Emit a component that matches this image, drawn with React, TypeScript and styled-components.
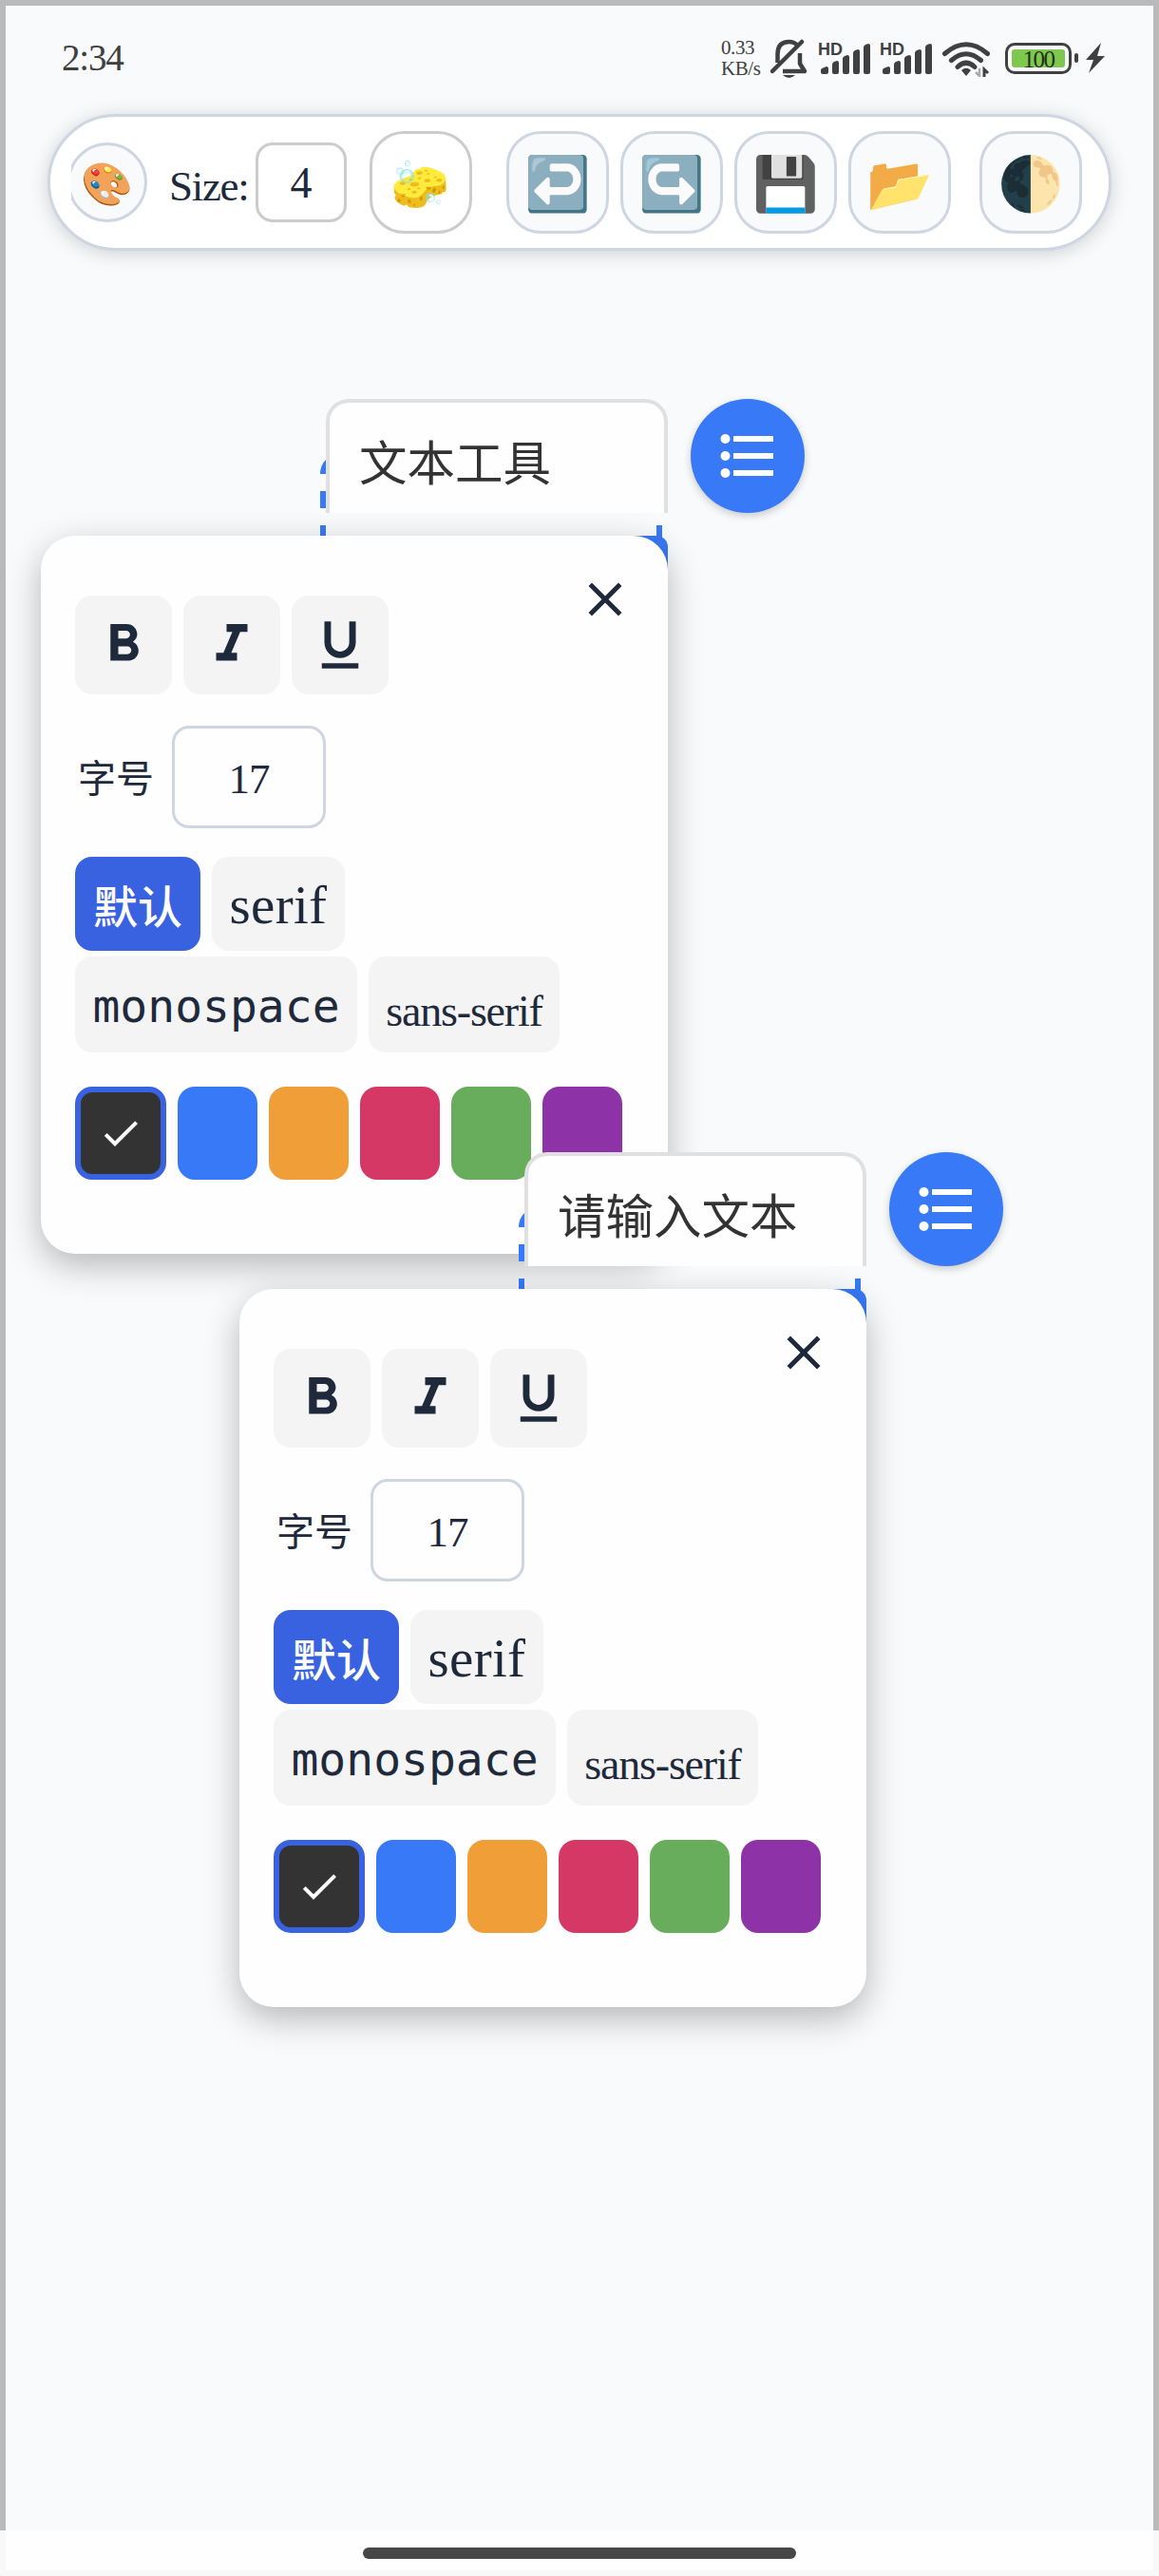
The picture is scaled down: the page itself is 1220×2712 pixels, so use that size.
import React from 'react';
import styled, { createGlobalStyle } from 'styled-components';
import { MdFormatBold, MdFormatItalic, MdFormatUnderlined, MdClose, MdCheck } from 'react-icons/md';

const GlobalStyle = createGlobalStyle`
  * { box-sizing: border-box; }
  body { margin: 0; }
  button { border: 0; padding: 0; font: inherit; color: inherit; }
`;

const serif = '"Liberation Serif", "Noto Sans CJK SC", serif';

const Screen = styled.div`
  width: 1220px;
  height: 2712px;
  display: flex;
  flex-direction: column;
  overflow: hidden;
  background: #f9fafc;
  color: #1e293b;
  font-family: ${serif};
`;

const Page = styled.main`
  position: relative;
  height: 2664px;
  border: solid #bababa;
  border-width: 6px 6px 0;
`;

const NavArea = styled.footer`
  height: 48px;
  display: flex;
  justify-content: center;
  padding-top: 18px;
  background: #fefefe;
  border: solid #f8f8f8;
  border-width: 0 6px 6px;
`;

const HomeBar = styled.div`
  width: 456px;
  height: 12px;
  border-radius: 6px;
  background: #474747;
`;

const StatusBar = styled.header`
  height: 114px;
  padding: 0 50px 4px 59px;
  display: flex;
  align-items: center;
  justify-content: space-between;
  color: #404040;
`;

const Clock = styled.span`
  font-size: 39px;
  letter-spacing: -1.2px;
  line-height: 44px;
`;

const StatusIcons = styled.div`
  display: flex;
  align-items: center;
  height: 44px;
`;

const Speed = styled.span`
  width: 52px;
  font-size: 21px;
  line-height: 22px;
  letter-spacing: -0.4px;
  white-space: nowrap;
`;

const MutedBell = styled.svg`
  margin-right: 11px;
`;

const Signal = styled.div`
  position: relative;
  width: 54px;
  height: 40px;
  margin-right: 11px;
`;

const HdMark = styled.span`
  position: absolute;
  left: -1px;
  top: 4px;
  font: bold 18px/14px "Liberation Sans", sans-serif;
`;

const Battery = styled.div`
  width: 70px;
  height: 33px;
  margin-left: 16px;
  padding: 4px;
  border: 3px solid #404040;
  border-radius: 10px;
  display: flex;
`;

const Charge = styled.span`
  flex: 1;
  border-radius: 3px;
  background: #7ec850;
  color: #20300f;
  text-align: center;
  font-size: 25px;
  line-height: 22px;
  letter-spacing: -1.6px;
`;

const BatteryTip = styled.div`
  width: 4px;
  height: 10px;
  margin: 0 7px 0 3px;
  border-radius: 2px;
  background: #404040;
`;

const Toolbar = styled.nav`
  margin-left: 44px;
  width: 1120px;
  height: 144px;
  padding: 0 22px;
  display: flex;
  align-items: center;
  border: 3px solid #ced6e2;
  border-radius: 72px;
  background: #fff;
  box-shadow: 0 3px 20px rgba(0, 0, 0, 0.17);
`;

const ToolScroller = styled.div`
  display: flex;
  align-items: center;
  width: 1070px;
  height: 138px;
  overflow: hidden;
`;

const PaletteButton = styled.button`
  flex: none;
  width: 84px;
  height: 84px;
  margin-left: -4px;
  padding-top: 4px;
  display: flex;
  align-items: center;
  justify-content: center;
  border: 3px solid #ced6e2;
  border-radius: 50%;
  background: #f8fafc;
`;

const SizeLabel = styled.label`
  flex: none;
  width: 91px;
  margin-left: 23px;
  font-size: 45px;
  letter-spacing: -1.3px;
  line-height: 84px;
  padding-top: 8px;
`;

const SizeInput = styled.div`
  flex: none;
  width: 96px;
  height: 84px;
  border: 3px solid #ccc;
  border-radius: 18px;
  font-size: 46px;
  line-height: 79px;
  text-align: center;
`;

const ToolButton = styled.button<{ $gap: number; $plain?: boolean }>`
  flex: none;
  width: 108px;
  height: 108px;
  margin-left: ${p => p.$gap}px;
  padding-top: 5px;
  display: flex;
  align-items: center;
  justify-content: center;
  border: 3px solid ${p => (p.$plain ? '#ccc' : '#ced6e2')};
  border-radius: 36px;
  background: ${p => (p.$plain ? '#fff' : '#f8fafc')};
`;

const Emoji = styled.span<{ $size: number }>`
  font-family: "Noto Color Emoji", sans-serif;
  font-size: ${p => p.$size}px;
  line-height: 1.2;
`;

const TextNode = styled.section<{ $x: number; $y: number }>`
  position: absolute;
  left: ${p => p.$x}px;
  top: ${p => p.$y}px;
  width: 804px;
`;

const Frame = styled.svg`
  position: absolute;
  left: 294px;
  top: 50px;
`;

const DoneTab = styled.div`
  position: absolute;
  left: 505px;
  top: 144px;
  width: 155px;
  height: 86px;
  border-radius: 12px;
  background: #3779f6;
`;

const NodeHead = styled.div`
  position: relative;
  display: flex;
  justify-content: flex-end;
  gap: 24px;
`;

const TextCard = styled.div`
  width: 360px;
  height: 120px;
  padding: 0 31px;
  border: solid #e0e0e0;
  border-width: 4px 4px 0;
  border-radius: 24px 24px 0 0;
  background: #fefefe;
  color: #333;
  font-size: 50.5px;
  line-height: 131px;
  white-space: nowrap;
`;

const MenuButton = styled.button`
  width: 120px;
  height: 120px;
  display: flex;
  align-items: center;
  justify-content: center;
  border-radius: 50%;
  background: #3779f6;
  box-shadow: 0 3px 9px rgba(0, 0, 0, 0.2);
`;

const Panel = styled.div`
  position: relative;
  width: 660px;
  height: 756px;
  margin-top: 24px;
  padding: 63px 36px 0;
  border-radius: 36px;
  background: #fefefe;
  box-shadow: 0 12px 36px rgba(0, 0, 0, 0.27);
`;

const CloseButton = styled.button`
  position: absolute;
  right: 36px;
  top: 37px;
  width: 60px;
  height: 60px;
  background: none;
`;

const Row = styled.div<{ $top?: number }>`
  display: flex;
  align-items: center;
  gap: 12px;
  margin-top: ${p => p.$top ?? 0}px;
`;

const FormatButton = styled.button`
  width: 102px;
  height: 104px;
  display: flex;
  align-items: center;
  justify-content: center;
  border-radius: 18px;
  background: #f4f4f4;
`;

const FieldLabel = styled.span`
  width: 90px;
  padding: 0 0 2px 3px;
  font-size: 40px;
  white-space: nowrap;
`;

const FieldInput = styled.div`
  width: 162px;
  height: 108px;
  border: 3px solid #ced6e2;
  border-radius: 18px;
  text-align: center;
  font-size: 45px;
  letter-spacing: -1px;
  line-height: 106px;
`;

const FontButton = styled.button<{ $w: number; $h: number; $font?: string; $size: number; $ls?: number; $line: number; $on?: boolean }>`
  width: ${p => p.$w}px;
  height: ${p => p.$h}px;
  display: flex;
  justify-content: center;
  align-items: flex-start;
  border-radius: 18px;
  background: ${p => (p.$on ? '#3862e0' : '#f4f4f4')};
  color: ${p => (p.$on ? '#fff' : '#1e293b')};
  font-family: ${p => p.$font ?? serif};
  font-size: ${p => p.$size}px;
  font-weight: ${p => (p.$on ? 500 : 400)};
  letter-spacing: ${p => p.$ls ?? 0}px;
  line-height: ${p => p.$line}px;
  white-space: nowrap;
`;

const Swatch = styled.button<{ $color: string; $on?: boolean }>`
  width: ${p => (p.$on ? 96 : 84)}px;
  height: 98px;
  display: flex;
  align-items: center;
  justify-content: center;
  border: ${p => (p.$on ? '6px solid #3862e0' : '0')};
  border-radius: 18px;
  background: ${p => p.$color};
  color: #fff;
`;

const swatches = ['#333333', '#3779f6', '#f09e38', '#d63865', '#68ad5c', '#8e32a8'];

function SignalIcon() {
  return (
    <Signal>
      <svg width="54" height="40" fill="#404040">
        <path d="M2 35v-2q0-1 1-2l5-2q2 0 2 2v4q0 2-2 2H4q-2 0-2-2z" />
        <path d="M14 27q0-2 2-3l3-1q2 0 2 2v10q0 2-2 2h-3q-2 0-2-2zM25 21q0-2 2-3l3-1q2 0 2 2v16q0 2-2 2h-3q-2 0-2-2zM36 15q0-2 2-3l3-1q2 0 2 2v22q0 2-2 2h-3q-2 0-2-2zM47 9q0-2 2-3l3-1q2 0 2 2v28q0 2-2 2h-3q-2 0-2-2z" />
      </svg>
      <HdMark>HD</HdMark>
    </Signal>
  );
}

function TextTool({ x, y, text }: { x: number; y: number; text: string }) {
  return (
    <TextNode $x={x} $y={y}>
      <Frame width="370" height="110" fill="none" stroke="#3779f6" strokeWidth="6">
        <path d="M3 29A19 19 0 0 1 22 10" />
        <path d="M3 47V105M357 83V105" strokeDasharray="18 18" />
      </Frame>
      <DoneTab />
      <NodeHead>
        <TextCard>{text}</TextCard>
        <MenuButton aria-label="menu">
          <svg width="60" height="60" fill="#fff">
            <circle cx="6.500" cy="12" r="5" /><rect x="15" y="9" width="42" height="6" />
            <circle cx="6.500" cy="30" r="5" /><rect x="15" y="27" width="42" height="6" />
            <circle cx="6.500" cy="48" r="5" /><rect x="15" y="45" width="42" height="6" />
          </svg>
        </MenuButton>
      </NodeHead>
      <Panel>
        <CloseButton aria-label="close"><MdClose size={60} /></CloseButton>
        <Row>
          <FormatButton><MdFormatBold size={66} /></FormatButton>
          <FormatButton><MdFormatItalic size={66} /></FormatButton>
          <FormatButton><MdFormatUnderlined size={66} /></FormatButton>
        </Row>
        <Row $top={33}>
          <FieldLabel>字号</FieldLabel>
          <FieldInput>17</FieldInput>
        </Row>
        <Row $top={30}>
          <FontButton $w={132} $h={99} $size={47} $line={108} $on>默认</FontButton>
          <FontButton $w={140} $h={99} $size={57} $ls={0.3} $line={101}>serif</FontButton>
        </Row>
        <Row $top={6}>
          <FontButton $w={297} $h={101} $size={48} $line={104} $font={'"DejaVu Sans Mono", monospace'}>monospace</FontButton>
          <FontButton $w={201} $h={101} $size={46} $line={115} $ls={-1.2}>sans-serif</FontButton>
        </Row>
        <Row $top={36}>
          {swatches.map((c, i) => (
            <Swatch key={c} $color={c} $on={i === 0}>{i === 0 && <MdCheck size={48} />}</Swatch>
          ))}
        </Row>
      </Panel>
    </TextNode>
  );
}

export default function App() {
  return (
    <Screen>
      <GlobalStyle />
      <Page>
        <StatusBar>
          <Clock>2:34</Clock>
          <StatusIcons>
            <Speed>0.33<br />KB/s</Speed>
            <MutedBell width="40" height="44" viewBox="0 0 40 44" fill="none" stroke="#404040" strokeWidth="4.500" strokeLinejoin="round">
              <path d="M7.500 27V18C7.500 9 12 5 19.500 5c4 0 7 1.500 9 4M31 17v11l5 8H13" />
              <path d="M2 36L33 5" strokeLinecap="round" />
              <path d="M13 40h13q-6.500 6-13 0z" fill="#404040" stroke="none" />
            </MutedBell>
            <SignalIcon />
            <SignalIcon />
            <svg width="50" height="40" viewBox="0 0 50 40" fill="none" stroke="#404040" strokeWidth="5">
              <path d="M2.500 15.500Q25-4 47.500 15.500M9.500 22.500Q25 9 40.500 22.500M16 29.500Q25 21 34 29.500" strokeLinecap="round" />
              <path d="M20 33q5-4.500 10 0l-5 6z" fill="#404040" stroke="none" />
              <path d="M39 31v8l-4-4" stroke="#aaa" strokeWidth="2.500" />
              <path d="M44 40v-8l4 4" strokeWidth="3" />
            </svg>
            <Battery><Charge>100</Charge></Battery>
            <BatteryTip />
            <svg width="22" height="34" fill="#404040"><path d="M17 1L1 19h8L4 33 21 15h-8z" /></svg>
          </StatusIcons>
        </StatusBar>
        <Toolbar>
          <ToolScroller>
            <PaletteButton><Emoji $size={44}>🎨</Emoji></PaletteButton>
            <SizeLabel>Size:</SizeLabel>
            <SizeInput>4</SizeInput>
            <ToolButton $gap={24} $plain><Emoji $size={50}>🧽</Emoji></ToolButton>
            <ToolButton $gap={36}><Emoji $size={56}>↩️</Emoji></ToolButton>
            <ToolButton $gap={12}><Emoji $size={56}>↪️</Emoji></ToolButton>
            <ToolButton $gap={12}><Emoji $size={56}>💾</Emoji></ToolButton>
            <ToolButton $gap={12}><Emoji $size={56}>📂</Emoji></ToolButton>
            <ToolButton $gap={30}><Emoji $size={56}>🌓</Emoji></ToolButton>
          </ToolScroller>
        </Toolbar>
        <TextTool x={37} y={414} text="文本工具" />
        <TextTool x={246} y={1207} text="请输入文本" />
      </Page>
      <NavArea><HomeBar /></NavArea>
    </Screen>
  );
}
